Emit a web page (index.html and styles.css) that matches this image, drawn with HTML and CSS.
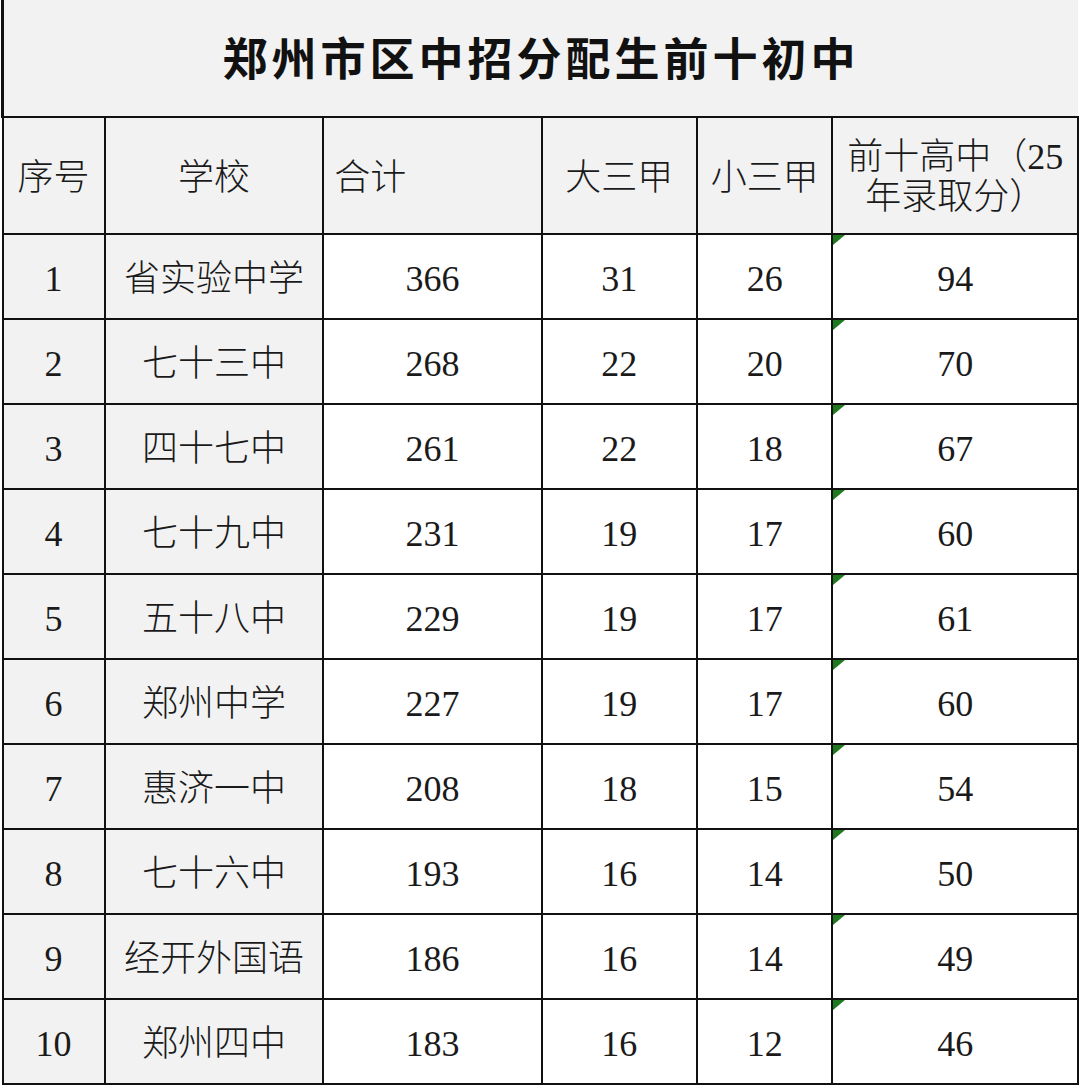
FILE: index.html
```html
<!DOCTYPE html>
<html lang="zh-CN">
<head>
<meta charset="utf-8">
<title>郑州市区中招分配生前十初中</title>
<link rel="stylesheet" href="styles.css">
</head>
<body>
<table class="sheet">
  <colgroup>
    <col class="c1"><col class="c2"><col class="c3"><col class="c4"><col class="c5"><col class="c6">
  </colgroup>
  <tr class="title-row"><td class="title" colspan="6">郑州市区中招分配生前十初中</td></tr>
  <tr class="head-row">
    <td class="gray">序号</td>
    <td class="gray">学校</td>
    <td class="gray left">合计</td>
    <td class="gray">大三甲</td>
    <td class="gray">小三甲</td>
    <td class="gray wrap">前十高中（25年录取分）</td>
  </tr>
  <tr><td class="gray">1</td><td class="gray">省实验中学</td><td>366</td><td>31</td><td>26</td><td class="flag">94</td></tr>
  <tr><td class="gray">2</td><td class="gray">七十三中</td><td>268</td><td>22</td><td>20</td><td class="flag">70</td></tr>
  <tr><td class="gray">3</td><td class="gray">四十七中</td><td>261</td><td>22</td><td>18</td><td class="flag">67</td></tr>
  <tr><td class="gray">4</td><td class="gray">七十九中</td><td>231</td><td>19</td><td>17</td><td class="flag">60</td></tr>
  <tr><td class="gray">5</td><td class="gray">五十八中</td><td>229</td><td>19</td><td>17</td><td class="flag">61</td></tr>
  <tr><td class="gray">6</td><td class="gray">郑州中学</td><td>227</td><td>19</td><td>17</td><td class="flag">60</td></tr>
  <tr><td class="gray">7</td><td class="gray">惠济一中</td><td>208</td><td>18</td><td>15</td><td class="flag">54</td></tr>
  <tr><td class="gray">8</td><td class="gray">七十六中</td><td>193</td><td>16</td><td>14</td><td class="flag">50</td></tr>
  <tr><td class="gray">9</td><td class="gray">经开外国语</td><td>186</td><td>16</td><td>14</td><td class="flag">49</td></tr>
  <tr><td class="gray">10</td><td class="gray">郑州四中</td><td>183</td><td>16</td><td>12</td><td class="flag">46</td></tr>
</table>
</body>
</html>
```
FILE: styles.css
```css
html, body {
  margin: 0;
  padding: 0;
  background: #ffffff;
}

.sheet {
  border-collapse: collapse;
  table-layout: fixed;
  width: 1078px;
  margin-left: 1px;
  font-family: "Liberation Serif", "Noto Sans CJK SC", serif;
  color: #1a1a1a;
}

.c1 { width: 102px; }
.c2 { width: 218px; }
.c3 { width: 218px; }
.c4 { width: 155px; }
.c5 { width: 135px; }
.c6 { width: 245px; }

.sheet td {
  border: 2px solid #111111;
  height: 79px;
  padding: 4px 0 0 0;
  text-align: center;
  vertical-align: middle;
  font-size: 36px;
  font-weight: 300;
  line-height: 40px;
  background: #ffffff;
}

.sheet .gray {
  background: #f2f2f2;
}

.title-row td.title {
  height: 110px;
  border-top: 0;
  border-right: 0;
  border-left: 3px solid #111111;
  background: #f2f2f2;
  font-size: 45px;
  font-weight: 700;
  letter-spacing: 4px;
  color: #111111;
  padding-top: 6px;
}

.head-row td {
  height: 111px;
}

.sheet td.left {
  text-align: left;
  padding-left: 10px;
}

.sheet td.wrap {
  padding: 2px 8px 0 8px;
  line-height: 40px;
  word-break: break-all;
}

.sheet td.flag {
  position: relative;
}

.sheet td.flag::before {
  content: "";
  position: absolute;
  left: 0;
  top: 0;
  width: 0;
  height: 0;
  border-top: 10px solid #1f7a1f;
  border-right: 12px solid transparent;
}
```
